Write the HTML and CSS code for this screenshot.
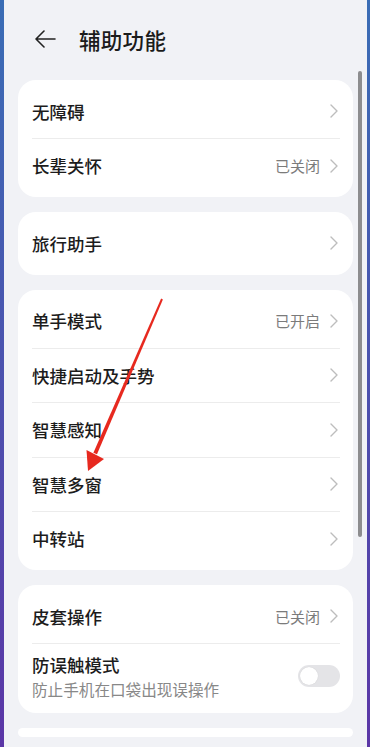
FILE: index.html
```html
<!DOCTYPE html>
<html lang="zh-CN">
<head>
<meta charset="utf-8">
<title>辅助功能</title>
<link rel="stylesheet" href="styles.css">
</head>
<body>
<div class="screen">
  <header class="header">
    <svg class="back" width="22" height="18" viewBox="0 0 22 18"><path d="M10 1 L2 9 L10 17 M2 9 H21" fill="none" stroke="#222" stroke-width="1.6" stroke-linecap="round" stroke-linejoin="round"/></svg>
    <h1 class="title">辅助功能</h1>
  </header>
  <main class="list">
    <section class="card">
      <div class="row"><span class="label">无障碍</span><svg class="chev" width="8" height="14" viewBox="0 0 8 14"><path d="M1 1 L7 7 L1 13" fill="none" stroke="#bdbdbd" stroke-width="1.4" stroke-linecap="round" stroke-linejoin="round"/></svg></div>
      <div class="divider"></div>
      <div class="row"><span class="label">长辈关怀</span><span class="value">已关闭</span><svg class="chev" width="8" height="14" viewBox="0 0 8 14"><path d="M1 1 L7 7 L1 13" fill="none" stroke="#bdbdbd" stroke-width="1.4" stroke-linecap="round" stroke-linejoin="round"/></svg></div>
    </section>
    <section class="card">
      <div class="row"><span class="label">旅行助手</span><svg class="chev" width="8" height="14" viewBox="0 0 8 14"><path d="M1 1 L7 7 L1 13" fill="none" stroke="#bdbdbd" stroke-width="1.4" stroke-linecap="round" stroke-linejoin="round"/></svg></div>
    </section>
    <section class="card">
      <div class="row"><span class="label">单手模式</span><span class="value">已开启</span><svg class="chev" width="8" height="14" viewBox="0 0 8 14"><path d="M1 1 L7 7 L1 13" fill="none" stroke="#bdbdbd" stroke-width="1.4" stroke-linecap="round" stroke-linejoin="round"/></svg></div>
      <div class="divider"></div>
      <div class="row"><span class="label">快捷启动及手势</span><svg class="chev" width="8" height="14" viewBox="0 0 8 14"><path d="M1 1 L7 7 L1 13" fill="none" stroke="#bdbdbd" stroke-width="1.4" stroke-linecap="round" stroke-linejoin="round"/></svg></div>
      <div class="divider"></div>
      <div class="row"><span class="label">智慧感知</span><svg class="chev" width="8" height="14" viewBox="0 0 8 14"><path d="M1 1 L7 7 L1 13" fill="none" stroke="#bdbdbd" stroke-width="1.4" stroke-linecap="round" stroke-linejoin="round"/></svg></div>
      <div class="divider"></div>
      <div class="row"><span class="label">智慧多窗</span><svg class="chev" width="8" height="14" viewBox="0 0 8 14"><path d="M1 1 L7 7 L1 13" fill="none" stroke="#bdbdbd" stroke-width="1.4" stroke-linecap="round" stroke-linejoin="round"/></svg></div>
      <div class="divider"></div>
      <div class="row"><span class="label">中转站</span><svg class="chev" width="8" height="14" viewBox="0 0 8 14"><path d="M1 1 L7 7 L1 13" fill="none" stroke="#bdbdbd" stroke-width="1.4" stroke-linecap="round" stroke-linejoin="round"/></svg></div>
    </section>
    <section class="card">
      <div class="row"><span class="label">皮套操作</span><span class="value">已关闭</span><svg class="chev" width="8" height="14" viewBox="0 0 8 14"><path d="M1 1 L7 7 L1 13" fill="none" stroke="#bdbdbd" stroke-width="1.4" stroke-linecap="round" stroke-linejoin="round"/></svg></div>
      <div class="divider"></div>
      <div class="row tall">
        <div class="texts">
          <span class="label">防误触模式</span>
          <span class="sub">防止手机在口袋出现误操作</span>
        </div>
        <div class="toggle"><div class="knob"></div></div>
      </div>
    </section>
    <section class="card"></section>
  </main>
  <div class="scrollbar"></div>
  <svg class="annot" width="370" height="747" viewBox="0 0 370 747">
    <polygon points="162.9,299.4 161.1,298.6 93.4,452.8 97,454.3" fill="#e7291f"/>
    <polygon points="88,471 86.5,450 104,459" fill="#e7291f"/>
  </svg>
</div>
</body>
</html>
```

FILE: styles.css
```css
html, body {
  margin: 0;
  padding: 0;
}
body {
  width: 370px;
  height: 747px;
  overflow: hidden;
  background: linear-gradient(to bottom, #3a6db5 0%, #4d4fae 55%, #5b36a6 100%);
  font-family: "Noto Sans CJK SC", "Noto Sans", sans-serif;
}
.screen {
  margin: 0 3px 0 4px;
  height: 747px;
  background: #f1f2f6;
  overflow: hidden;
}
.header {
  height: 78px;
  display: flex;
  align-items: center;
  padding-left: 30px;
  box-sizing: border-box;
}
.back {
  display: block;
  margin-right: 23px;
}
.title {
  margin: 0;
  font-size: 21.5px;
  font-weight: 500;
  color: #1b1b1b;
  letter-spacing: 0.3px;
}
.list {
  display: flex;
  flex-direction: column;
  gap: 15px;
  padding: 2px 14px 0;
}
.card {
  background: #ffffff;
  border-radius: 18px;
  padding: 4.5px 0;
}
.row {
  height: 53.5px;
  display: flex;
  align-items: center;
  padding: 0 15px 0 14px;
}
.row.tall {
  height: 64.5px;
  padding-right: 13px;
}
.label {
  flex: 1;
  font-size: 17.5px;
  font-weight: 500;
  color: #1c1c1c;
}
.value {
  font-size: 15px;
  color: #7b7b7b;
  margin-right: 10px;
}
.chev {
  display: block;
}
.divider {
  height: 1px;
  background: #ececec;
  margin: 0 13px 0 14px;
}
.texts {
  flex: 1;
  display: flex;
  flex-direction: column;
  gap: 1px;
}
.texts .label {
  line-height: 24px;
}
.sub {
  font-size: 15.6px;
  color: #888888;
  line-height: 22px;
}
.toggle {
  width: 42px;
  height: 22px;
  border-radius: 11px;
  background: #e4e4e7;
  display: flex;
  align-items: center;
  padding: 0 2px;
  box-sizing: border-box;
}
.knob {
  width: 18px;
  height: 18px;
  border-radius: 50%;
  background: #ffffff;
  box-shadow: 0 0 1px rgba(0,0,0,0.15);
}
.scrollbar {
  position: absolute;
  left: 358px;
  top: 71px;
  width: 4px;
  height: 466px;
  border-radius: 2px;
  background: #8d8d8f;
}
.annot {
  position: absolute;
  left: 0;
  top: 0;
  pointer-events: none;
}
```
